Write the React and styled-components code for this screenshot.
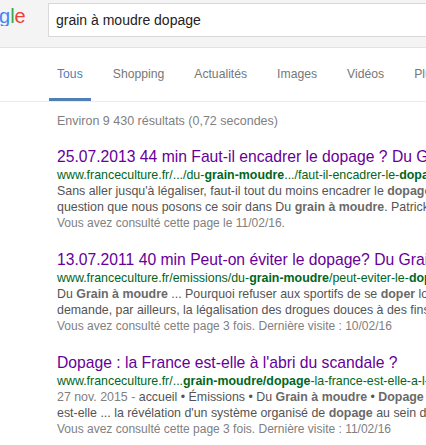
import React from 'react'
import styled, { createGlobalStyle } from 'styled-components'

const GlobalStyle = createGlobalStyle`
  body {
    margin: 0;
    background: #fff;
    font-family: "Liberation Sans", Arial, sans-serif;
    overflow: hidden;
  }
`

const Header = styled.header`
  display: flex;
  align-items: flex-start;
  height: 47px;
  background: #f4f4f4;
  border-bottom: 1px solid #e4e4e4;
`

const LogoBox = styled.div`
  width: 48px;
  flex-shrink: 0;
  overflow: hidden;
`

const Logo = styled.div`
  margin: 6px 0 0 -1px;
  font-size: 20px;
  line-height: 20px;
  white-space: nowrap;
`

const Letter = styled.span`
  color: ${(props) => props.color};
`

const SearchBox = styled.div`
  flex: 1;
  margin-top: 3px;
  height: 34px;
  box-sizing: border-box;
  padding-left: 7px;
  background: #fff;
  border: 1px solid #d9d9d9;
  border-right: none;
  font-size: 14px;
  line-height: 32px;
  color: #222;
  white-space: nowrap;
`

const Tabs = styled.nav`
  display: flex;
  gap: 14px;
  padding-left: 49px;
  border-bottom: 1px solid #ebebeb;
  overflow: hidden;
`

const Tab = styled.div`
  flex-shrink: 0;
  padding: 19px 8px 17px;
  font-size: 12.2px;
  line-height: 14px;
  color: ${(props) => (props.active ? '#4f7fb5' : '#777')};
  border-bottom: 3px solid ${(props) => (props.active ? '#4f7fb5' : 'transparent')};
  white-space: nowrap;
`

const Main = styled.main`
  padding: 11px 0 0 57px;
`

const Stats = styled.div`
  font-size: 12.5px;
  line-height: 16px;
  color: #808080;
  margin-bottom: 18px;
  white-space: nowrap;
`

const Result = styled.div`
  margin-bottom: 19px;
  white-space: nowrap;
`

const Title = styled.h3`
  margin: 0;
  font-size: 15.7px;
  font-weight: normal;
  line-height: 20px;
  color: #660099;
`

const Url = styled.div`
  font-size: 12.4px;
  line-height: 16px;
  color: #006621;

  b {
    font-weight: bold;
  }
`

const Line = styled.div`
  font-size: ${(props) => (props.muted ? '12px' : '12.4px')};
  line-height: 16px;
  color: ${(props) => (props.muted ? '#808080' : '#545454')};

  b {
    color: #6a6a6a;
  }
`

const Date = styled.span`
  color: #808080;
`

const tabs = ['Tous', 'Shopping', 'Actualités', 'Images', 'Vidéos', 'Plus']

function App() {
  return (
    <>
      <GlobalStyle />
      <Header>
        <LogoBox>
          <Logo>
            <Letter color="#4285f4">g</Letter>
            <Letter color="#34a853">l</Letter>
            <Letter color="#ea4335">e</Letter>
          </Logo>
        </LogoBox>
        <SearchBox>grain à moudre dopage</SearchBox>
      </Header>
      <Tabs>
        {tabs.map((t, i) => (
          <Tab key={t} active={i === 0}>
            {t}
          </Tab>
        ))}
      </Tabs>
      <Main>
        <Stats>Environ 9 430 résultats (0,72 secondes)</Stats>

        <Result>
          <Title>25.07.2013 44 min Faut-il encadrer le dopage ? Du Grain à moudre</Title>
          <Url>
            www.franceculture.fr/.../du-<b>grain-moudre</b>.../faut-il-encadrer-le-<b>dopage</b>
          </Url>
          <Line>
            Sans aller jusqu'à légaliser, faut-il tout du moins encadrer le <b>dopage</b> ? C'est la
          </Line>
          <Line>
            question que nous posons ce soir dans Du <b>grain à moudre</b>. Patrick Laure
          </Line>
          <Line muted>Vous avez consulté cette page le 11/02/16.</Line>
        </Result>

        <Result>
          <Title>13.07.2011 40 min Peut-on éviter le dopage? Du Grain à moudre</Title>
          <Url>
            www.franceculture.fr/emissions/du-<b>grain-moudre</b>/peut-eviter-le-<b>dopage</b>
          </Url>
          <Line>
            Du <b>Grain à moudre</b> ... Pourquoi refuser aux sportifs de se <b>doper</b> lorsque l'on
          </Line>
          <Line>
            demande, par ailleurs, la légalisation des drogues douces à des fins
          </Line>
          <Line muted>Vous avez consulté cette page 3 fois. Dernière visite : 10/02/16</Line>
        </Result>

        <Result>
          <Title>Dopage : la France est-elle à l'abri du scandale ?</Title>
          <Url>
            www.franceculture.fr/...<b>grain-moudre/dopage</b>-la-france-est-elle-a-l-abri
          </Url>
          <Line>
            <Date>27 nov. 2015 - </Date>accueil • Émissions • Du <b>Grain à moudre</b> • <b>Dopage</b> : la France
          </Line>
          <Line>
            est-elle ... la révélation d'un système organisé de <b>dopage</b> au sein de
          </Line>
          <Line muted>Vous avez consulté cette page 3 fois. Dernière visite : 11/02/16</Line>
        </Result>
      </Main>
    </>
  )
}

export default App
